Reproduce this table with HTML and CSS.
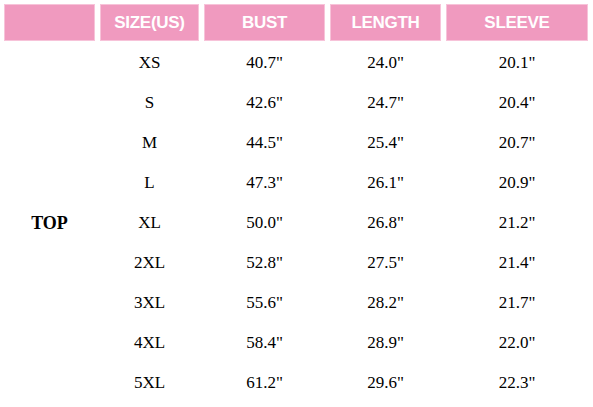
FILE: index.html
```html
<!DOCTYPE html>
<html>
<head>
<meta charset="utf-8">
<link rel="stylesheet" href="styles.css">
</head>
<body>
<div class="chart">
  <div class="head"></div>
  <div class="head">SIZE(US)</div>
  <div class="head">BUST</div>
  <div class="head">LENGTH</div>
  <div class="head">SLEEVE</div>

  <div class="cat">TOP</div>

  <div class="cell">XS</div><div class="cell">40.7"</div><div class="cell">24.0"</div><div class="cell">20.1"</div>
  <div class="cell">S</div><div class="cell">42.6"</div><div class="cell">24.7"</div><div class="cell">20.4"</div>
  <div class="cell">M</div><div class="cell">44.5"</div><div class="cell">25.4"</div><div class="cell">20.7"</div>
  <div class="cell">L</div><div class="cell">47.3"</div><div class="cell">26.1"</div><div class="cell">20.9"</div>
  <div class="cell">XL</div><div class="cell">50.0"</div><div class="cell">26.8"</div><div class="cell">21.2"</div>
  <div class="cell">2XL</div><div class="cell">52.8"</div><div class="cell">27.5"</div><div class="cell">21.4"</div>
  <div class="cell">3XL</div><div class="cell">55.6"</div><div class="cell">28.2"</div><div class="cell">21.7"</div>
  <div class="cell">4XL</div><div class="cell">58.4"</div><div class="cell">28.9"</div><div class="cell">22.0"</div>
  <div class="cell">5XL</div><div class="cell">61.2"</div><div class="cell">29.6"</div><div class="cell">22.3"</div>
</div>
</body>
</html>
```

FILE: styles.css
```css
html, body {
  margin: 0;
  padding: 0;
  background: #ffffff;
}

.chart {
  display: grid;
  grid-template-columns: 91px 99px 121px 111px 142px;
  grid-template-rows: 39px repeat(9, 40px);
  column-gap: 5px;
  padding: 4px 0 0 4px;
}

.head {
  height: 37px;
  box-sizing: border-box;
  background: #f09abf;
  border: 1px solid #f7c3d9;
  color: #ffffff;
  font-family: "Liberation Sans", Arial, sans-serif;
  font-weight: bold;
  font-size: 17px;
  letter-spacing: -0.3px;
  display: flex;
  align-items: center;
  justify-content: center;
}

.cat {
  grid-column: 1;
  grid-row: 2 / span 9;
  display: flex;
  align-items: center;
  justify-content: center;
  font-family: "Liberation Serif", "Times New Roman", serif;
  font-weight: bold;
  font-size: 18px;
  color: #000000;
}

.cell {
  display: flex;
  align-items: center;
  justify-content: center;
  font-family: "Liberation Serif", "Times New Roman", serif;
  font-size: 17px;
  color: #000000;
}
```
